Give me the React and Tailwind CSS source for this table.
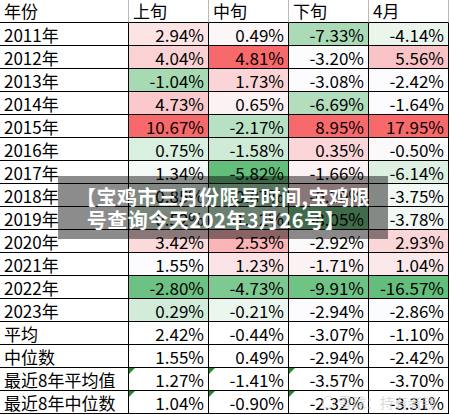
import React from 'react';

const rows = [
  ['2011年', ['2.94%', '#fce3e4'], ['0.49%', '#fcf6f8'], ['-7.33%', '#aadab6'], ['-4.14%', '#eaf5ec']],
  ['2012年', ['4.04%', '#fad2d4'], ['4.81%', '#f8696b'], ['-3.20%', '#fcfcff'], ['5.56%', '#fac4c6']],
  ['2013年', ['-1.04%', '#a7d9b3'], ['1.73%', '#fad4d6'], ['-3.08%', '#fcfcff'], ['-2.42%', '#fcfcff']],
  ['2014年', ['4.73%', '#fac9cb'], ['0.65%', '#fcf1f3'], ['-6.69%', '#b2debe'], ['-1.64%', '#fcfcff']],
  ['2015年', ['10.67%', '#f8696b'], ['-2.17%', '#b8e1c3'], ['8.95%', '#f8696b'], ['17.95%', '#f8696b']],
  ['2016年', ['0.75%', '#d9efdf'], ['-1.58%', '#cdebd6'], ['0.35%', '#fad6d8'], ['-0.50%', '#fcf9fb']],
  ['2017年', ['1.34%', '#f4faf6'], ['-5.82%', '#63be7b'], ['-1.66%', '#fcf1f3'], ['-6.14%', '#ddf0e2']],
  ['2018年', ['0.85%', '#e6f4ea'], ['-0.87%', '#9fd6ad'], ['-0.20%', '#fad9db'], ['-3.75%', '#f2f9f4']],
  ['2019年', ['0.52%', '#dcf0e1'], ['-1.12%', '#c4e7ce'], ['-8.05%', '#73c488'], ['-3.78%', '#f2f9f4']],
  ['2020年', ['3.42%', '#fbdadc'], ['2.53%', '#f9b5b7'], ['-2.92%', '#fcf9fb'], ['2.93%', '#fad6d8']],
  ['2021年', ['1.55%', '#fcfcff'], ['1.23%', '#fce4e6'], ['-1.71%', '#fcf2f4'], ['1.04%', '#fbe8ea']],
  ['2022年', ['-2.80%', '#6dc283'], ['-4.73%', '#7dc991'], ['-9.91%', '#6fc385'], ['-16.57%', '#63be7b']],
  ['2023年', ['0.29%', '#d2ecd9'], ['-0.21%', '#ebf6ee'], ['-2.94%', '#fcfcff'], ['-2.86%', '#fafcfd']],
  ['平均', ['2.42%'], ['-0.44%'], ['-3.07%'], ['-1.10%']],
  ['中位数', ['1.55%'], ['0.49%'], ['-2.94%'], ['-2.42%']],
  ['最近8年平均值', ['1.27%', null, true], ['-1.41%', null, true], ['-3.57%', null, true], ['-3.70%']],
  ['最近8年中位数', ['1.04%', null, true], ['-0.90%', null, true], ['-2.32%', null, true], ['-3.31%']],
];

const font = { fontFamily: '"Noto Sans CJK SC", "Liberation Sans", sans-serif' };

const Cell = ({ value, bg, flag }) => (
  <div
    className="relative w-[80px] h-[23px] border-b border-r border-black flex justify-end items-start pr-[4px] pt-[1px] text-[17px] leading-[21px] text-black"
    style={{ backgroundColor: bg || '#ffffff' }}
  >
    {flag && (
      <span className="absolute left-0 top-0 w-0 h-0 border-t-[6px] border-r-[6px] border-t-[#1f8a2e] border-r-transparent" />
    )}
    {value}
  </div>
);

export default function App() {
  return (
    <div className="relative w-[449px] h-[415px] bg-white overflow-hidden" style={font}>
      {/* 表头 */}
      <div className="flex">
        <div className="w-[129px] h-[23px] border-b border-r border-b-black border-r-[#b8b8b8] pl-[4px] text-[17px] leading-[22px]">年份</div>
        {['上旬', '中旬', '下旬', '4月'].map((h) => (
          <div key={h} className="w-[80px] h-[23px] border-b border-r border-b-black border-r-[#b8b8b8] pl-[4px] text-[17px] leading-[22px]">{h}</div>
        ))}
      </div>

      {rows.map(([label, ...cells]) => (
        <div key={label} className="flex">
          <div className="w-[129px] h-[23px] border-b border-r border-black pl-[4px] pt-[1px] text-[17px] leading-[21px]">{label}</div>
          {cells.map(([v, bg, flag], i) => (
            <Cell key={i} value={v} bg={bg} flag={flag} />
          ))}
        </div>
      ))}

      {/* 标题遮罩 */}
      <div className="absolute left-[58px] top-[176px] w-[330px] h-[63px] bg-[rgba(0,0,0,0.45)] flex flex-col items-center justify-center text-white font-bold text-[20px] leading-[23px] tracking-[0.5px]">
        <div>【宝鸡市三月份限号时间,宝鸡限</div>
        <div className="pr-[14px]">号查询今天202年3月26号】</div>
      </div>

      {/* 水印 */}
      <div className="absolute left-[322px] top-[394px] flex items-center gap-[3px] text-[14px] leading-[16px] text-[#c8c8c8] opacity-70">
        <span className="w-[13px] h-[13px] rounded-full border border-[#c8c8c8]" />
        <span>雪球：持有者钱</span>
      </div>
    </div>
  );
}
